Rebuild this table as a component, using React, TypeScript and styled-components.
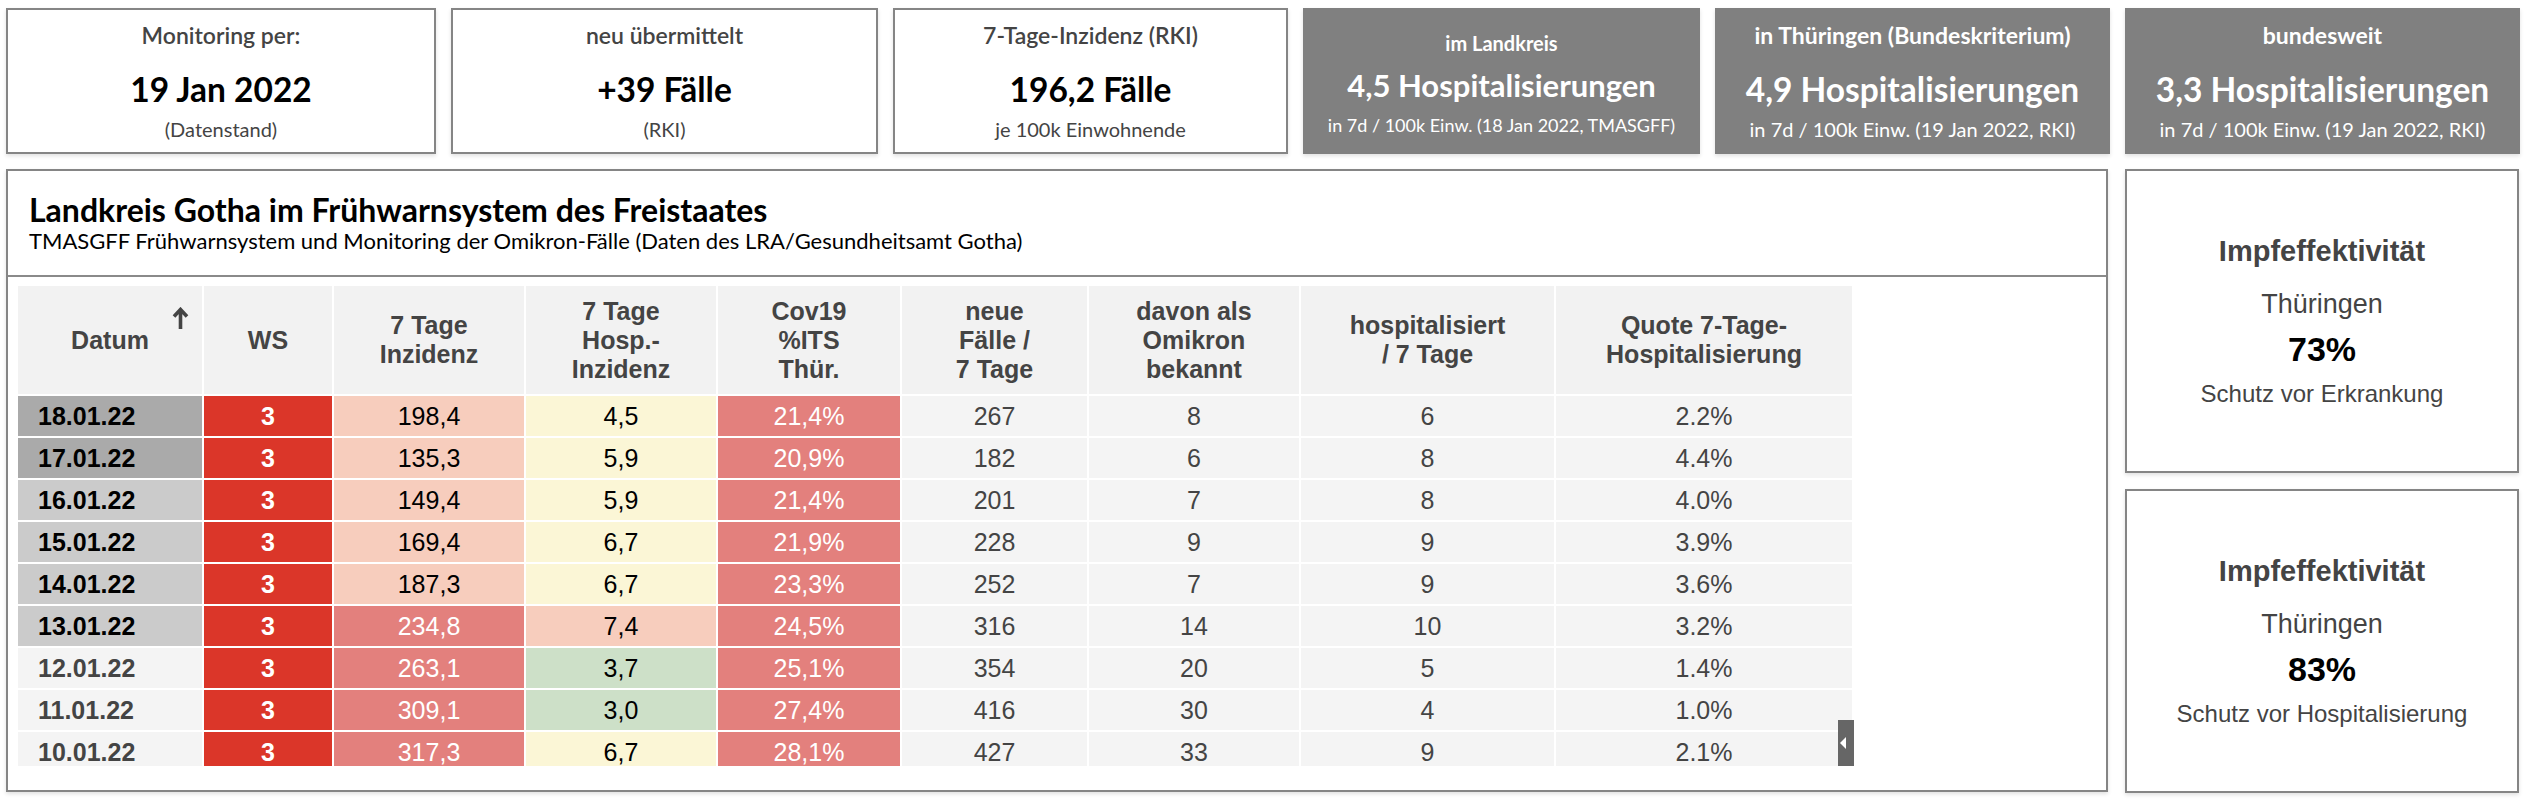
import React from "react";
import styled, { createGlobalStyle } from "styled-components";

const GlobalStyle = createGlobalStyle`
  html, body {
    margin: 0;
    padding: 0;
    background: #ffffff;
  }
  body {
    font-family: Lato, "Liberation Sans", Arial, sans-serif;
  }
`;

type Tone = "ws" | "salmon" | "red" | "yellow" | "green" | "plain" | "dateDark" | "dateMid" | "dateLight";

const TONES: Record<Tone, { bg: string; fg: string }> = {
  ws: { bg: "#db3629", fg: "#ffffff" },
  salmon: { bg: "#f7cdbd", fg: "#000000" },
  red: { bg: "#e3807d", fg: "#ffffff" },
  yellow: { bg: "#fbf6d6", fg: "#000000" },
  green: { bg: "#cde0c8", fg: "#000000" },
  plain: { bg: "#f4f4f4", fg: "#444444" },
  dateDark: { bg: "#aaaaaa", fg: "#000000" },
  dateMid: { bg: "#cbcbcb", fg: "#000000" },
  dateLight: { bg: "#f4f4f4", fg: "#444444" },
};

type Row = {
  date: string;
  dateTone: Tone;
  ws: number;
  inz: string;
  inzTone: Tone;
  hosp: string;
  hospTone: Tone;
  its: string;
  cases: number;
  omikron: number;
  hospitalized: number;
  quote: string;
};

const rows: Row[] = [
  { date: "18.01.22", dateTone: "dateDark", ws: 3, inz: "198,4", inzTone: "salmon", hosp: "4,5", hospTone: "yellow", its: "21,4%", cases: 267, omikron: 8, hospitalized: 6, quote: "2.2%" },
  { date: "17.01.22", dateTone: "dateDark", ws: 3, inz: "135,3", inzTone: "salmon", hosp: "5,9", hospTone: "yellow", its: "20,9%", cases: 182, omikron: 6, hospitalized: 8, quote: "4.4%" },
  { date: "16.01.22", dateTone: "dateMid", ws: 3, inz: "149,4", inzTone: "salmon", hosp: "5,9", hospTone: "yellow", its: "21,4%", cases: 201, omikron: 7, hospitalized: 8, quote: "4.0%" },
  { date: "15.01.22", dateTone: "dateMid", ws: 3, inz: "169,4", inzTone: "salmon", hosp: "6,7", hospTone: "yellow", its: "21,9%", cases: 228, omikron: 9, hospitalized: 9, quote: "3.9%" },
  { date: "14.01.22", dateTone: "dateMid", ws: 3, inz: "187,3", inzTone: "salmon", hosp: "6,7", hospTone: "yellow", its: "23,3%", cases: 252, omikron: 7, hospitalized: 9, quote: "3.6%" },
  { date: "13.01.22", dateTone: "dateMid", ws: 3, inz: "234,8", inzTone: "red", hosp: "7,4", hospTone: "salmon", its: "24,5%", cases: 316, omikron: 14, hospitalized: 10, quote: "3.2%" },
  { date: "12.01.22", dateTone: "dateLight", ws: 3, inz: "263,1", inzTone: "red", hosp: "3,7", hospTone: "green", its: "25,1%", cases: 354, omikron: 20, hospitalized: 5, quote: "1.4%" },
  { date: "11.01.22", dateTone: "dateLight", ws: 3, inz: "309,1", inzTone: "red", hosp: "3,0", hospTone: "green", its: "27,4%", cases: 416, omikron: 30, hospitalized: 4, quote: "1.0%" },
  { date: "10.01.22", dateTone: "dateLight", ws: 3, inz: "317,3", inzTone: "red", hosp: "6,7", hospTone: "yellow", its: "28,1%", cases: 427, omikron: 33, hospitalized: 9, quote: "2.1%" },
];

const columns = [184, 128, 190, 190, 182, 185, 210, 253, 296];

type Kpi = {
  title: string;
  value: string;
  sub: string;
  dark?: boolean;
  compact?: boolean;
};

const kpis: Kpi[] = [
  { title: "Monitoring per:", value: "19 Jan 2022", sub: "(Datenstand)" },
  { title: "neu übermittelt", value: "+39 Fälle", sub: "(RKI)" },
  { title: "7-Tage-Inzidenz (RKI)", value: "196,2 Fälle", sub: "je 100k Einwohnende" },
  { title: "im Landkreis", value: "4,5 Hospitalisierungen", sub: "in 7d / 100k Einw. (18 Jan 2022, TMASGFF)", dark: true, compact: true },
  { title: "in Thüringen (Bundeskriterium)", value: "4,9 Hospitalisierungen", sub: "in 7d / 100k Einw. (19 Jan 2022, RKI)", dark: true },
  { title: "bundesweit", value: "3,3 Hospitalisierungen", sub: "in 7d / 100k Einw. (19 Jan 2022, RKI)", dark: true },
];

export default function App() {
  return (
    <>
      <GlobalStyle />
      <Page>
        <KpiRow>
          {kpis.map((k) => (
            <KpiCard key={k.title} $dark={k.dark}>
              <KpiTitle $dark={k.dark} $compact={k.compact}>{k.title}</KpiTitle>
              <KpiValue $dark={k.dark} $compact={k.compact}>{k.value}</KpiValue>
              <KpiSub $dark={k.dark} $compact={k.compact}>{k.sub}</KpiSub>
            </KpiCard>
          ))}
        </KpiRow>

        <MainRow>
          <Panel>
            <PanelHeader>
              <PanelTitle>Landkreis Gotha im Frühwarnsystem des Freistaates</PanelTitle>
              <PanelSubtitle>
                TMASGFF Frühwarnsystem und Monitoring der Omikron-Fälle (Daten des LRA/Gesundheitsamt Gotha)
              </PanelSubtitle>
            </PanelHeader>
            <PanelBody>
              <TableWrap>
                <TableScroll>
                  <Table>
                    <colgroup>
                      {columns.map((w, i) => (
                        <col key={i} style={{ width: w }} />
                      ))}
                    </colgroup>
                    <thead>
                      <tr>
                        <Th>
                          Datum
                          <SortArrow width="17" height="23" viewBox="0 0 17 23" aria-hidden="true">
                            <path
                              d="M8.5 22 V3 M2 9.5 L8.5 2.5 L15 9.5"
                              fill="none"
                              stroke="#444444"
                              strokeWidth="3.6"
                              strokeLinecap="butt"
                              strokeLinejoin="miter"
                            />
                          </SortArrow>
                        </Th>
                        <Th>WS</Th>
                        <Th>7 Tage<br />Inzidenz</Th>
                        <Th>7 Tage<br />Hosp.-<br />Inzidenz</Th>
                        <Th>Cov19<br />%ITS<br />Thür.</Th>
                        <Th>neue<br />Fälle /<br />7 Tage</Th>
                        <Th>davon als<br />Omikron<br />bekannt</Th>
                        <Th>hospitalisiert<br />/ 7 Tage</Th>
                        <Th>Quote 7-Tage-<br />Hospitalisierung</Th>
                      </tr>
                    </thead>
                    <tbody>
                      {rows.map((r) => (
                        <tr key={r.date}>
                          <DateCell $tone={r.dateTone}>{r.date}</DateCell>
                          <Td $tone="ws" $bold>{r.ws}</Td>
                          <Td $tone={r.inzTone}>{r.inz}</Td>
                          <Td $tone={r.hospTone}>{r.hosp}</Td>
                          <Td $tone="red">{r.its}</Td>
                          <Td $tone="plain">{r.cases}</Td>
                          <Td $tone="plain">{r.omikron}</Td>
                          <Td $tone="plain">{r.hospitalized}</Td>
                          <Td $tone="plain">{r.quote}</Td>
                        </tr>
                      ))}
                    </tbody>
                  </Table>
                </TableScroll>
                <SideToggle aria-label="Seitenleiste">
                  <svg width="6" height="12" viewBox="0 0 6 12">
                    <path d="M6 0 L0 6 L6 12 Z" fill="#ffffff" />
                  </svg>
                </SideToggle>
              </TableWrap>
            </PanelBody>
          </Panel>

          <SideColumn>
            <EffectCard>
              <EffectTitle>Impfeffektivität</EffectTitle>
              <EffectRegion>Thüringen</EffectRegion>
              <EffectValue>73%</EffectValue>
              <EffectLabel>Schutz vor Erkrankung</EffectLabel>
            </EffectCard>
            <EffectCard>
              <EffectTitle>Impfeffektivität</EffectTitle>
              <EffectRegion>Thüringen</EffectRegion>
              <EffectValue>83%</EffectValue>
              <EffectLabel>Schutz vor Hospitalisierung</EffectLabel>
            </EffectCard>
          </SideColumn>
        </MainRow>
      </Page>
    </>
  );
}

const Page = styled.div`
  width: 2525px;
  height: 802px;
  box-sizing: border-box;
  padding: 8px 6px 0 6px;
  display: flex;
  flex-direction: column;
  gap: 15px;
`;

const KpiRow = styled.div`
  display: grid;
  grid-template-columns: 430px 427px 395px 397px 395px 395px;
  gap: 15px;
  height: 146px;
`;

const KpiCard = styled.div<{ $dark?: boolean }>`
  box-sizing: border-box;
  display: flex;
  flex-direction: column;
  align-items: center;
  justify-content: center;
  text-align: center;
  background: ${(p) => (p.$dark ? "#808080" : "#ffffff")};
  border: ${(p) => (p.$dark ? "none" : "2px solid #858585")};
  box-shadow: 0 2px 4px rgba(0, 0, 0, 0.12);
  font-family: Lato, "Liberation Sans", sans-serif;
  white-space: nowrap;
`;

const KpiTitle = styled.div<{ $dark?: boolean; $compact?: boolean }>`
  font-size: ${(p) => (p.$compact ? "20px" : "23px")};
  line-height: ${(p) => (p.$compact ? "24px" : "27px")};
  font-weight: ${(p) => (p.$dark ? 700 : 600)};
  color: ${(p) => (p.$dark ? "#ffffff" : "#444444")};
  margin-top: ${(p) => (p.$compact ? "4px" : "0")};
  margin-bottom: ${(p) => (p.$compact ? "12px" : "20px")};
`;

const KpiValue = styled.div<{ $dark?: boolean; $compact?: boolean }>`
  font-size: ${(p) => (p.$compact ? "31px" : "33.5px")};
  line-height: ${(p) => (p.$compact ? "37px" : "40px")};
  font-weight: 700;
  color: ${(p) => (p.$dark ? "#ffffff" : "#000000")};
  margin-bottom: ${(p) => (p.$compact ? "10px" : "8px")};
`;

const KpiSub = styled.div<{ $dark?: boolean; $compact?: boolean }>`
  font-size: ${(p) => (p.$compact ? "18px" : "20px")};
  line-height: ${(p) => (p.$compact ? "22px" : "24px")};
  font-weight: 400;
  color: ${(p) => (p.$dark ? "#ffffff" : "#444444")};
`;

const MainRow = styled.div`
  display: grid;
  grid-template-columns: 2102px 394px;
  gap: 17px;
  height: 624px;
`;

const Panel = styled.section`
  box-sizing: border-box;
  border: 2px solid #858585;
  box-shadow: 0 2px 4px rgba(0, 0, 0, 0.12);
  display: flex;
  flex-direction: column;
  height: 623px;
`;

const PanelHeader = styled.header`
  padding: 20px 21px 21px 21px;
  border-bottom: 2px solid #8a8a8a;
  font-family: Lato, "Liberation Sans", sans-serif;
`;

const PanelTitle = styled.h2`
  margin: 0;
  font-size: 32px;
  line-height: 38px;
  font-weight: 700;
  color: #000000;
`;

const PanelSubtitle = styled.p`
  margin: -1px 0 0 0;
  font-size: 22px;
  line-height: 26px;
  font-weight: 400;
  color: #000000;
`;

const PanelBody = styled.div`
  padding: 9px 10px 0 10px;
`;

const TableWrap = styled.div`
  position: relative;
  width: fit-content;
`;

const TableScroll = styled.div`
  height: 480px;
  overflow: hidden;
`;

const Table = styled.table`
  table-layout: fixed;
  border-collapse: separate;
  border-spacing: 2px;
  margin: -2px;
  font-family: "Liberation Sans", Arial, sans-serif;
  font-size: 25px;
`;

const Th = styled.th`
  position: relative;
  height: 108px;
  padding: 0 6px;
  box-sizing: border-box;
  background: #f2f2f2;
  color: #444444;
  font-weight: 700;
  line-height: 29px;
  text-align: center;
  vertical-align: middle;
`;

const SortArrow = styled.svg`
  position: absolute;
  top: 21px;
  right: 13px;
`;

const Td = styled.td<{ $tone: Tone; $bold?: boolean }>`
  height: 40px;
  padding: 0 6px;
  box-sizing: border-box;
  background: ${(p) => TONES[p.$tone].bg};
  color: ${(p) => TONES[p.$tone].fg};
  font-weight: ${(p) => (p.$bold ? 700 : 400)};
  line-height: 40px;
  text-align: center;
  white-space: nowrap;
`;

const DateCell = styled(Td)`
  text-align: left;
  padding-left: 20px;
  font-weight: 700;
`;

const SideToggle = styled.button`
  position: absolute;
  right: -2px;
  bottom: 0;
  width: 16px;
  height: 46px;
  padding: 0 0 0 2px;
  border: none;
  background: #666666;
  display: flex;
  align-items: center;
  justify-content: flex-start;
`;

const SideColumn = styled.div`
  display: flex;
  flex-direction: column;
  gap: 16px;
`;

const EffectCard = styled.div`
  box-sizing: border-box;
  height: 304px;
  border: 2px solid #858585;
  box-shadow: 0 2px 4px rgba(0, 0, 0, 0.12);
  display: flex;
  flex-direction: column;
  align-items: center;
  justify-content: center;
  font-family: "Liberation Sans", Arial, sans-serif;
  text-align: center;
`;

const EffectTitle = styled.div`
  font-size: 29px;
  line-height: 34px;
  font-weight: 700;
  color: #444444;
  margin-bottom: 19px;
`;

const EffectRegion = styled.div`
  font-size: 27px;
  line-height: 34px;
  color: #444444;
  margin-bottom: 6px;
`;

const EffectValue = styled.div`
  font-size: 34px;
  line-height: 44px;
  font-weight: 700;
  color: #000000;
  margin-bottom: 8px;
`;

const EffectLabel = styled.div`
  font-size: 24px;
  line-height: 30px;
  color: #444444;
`;
